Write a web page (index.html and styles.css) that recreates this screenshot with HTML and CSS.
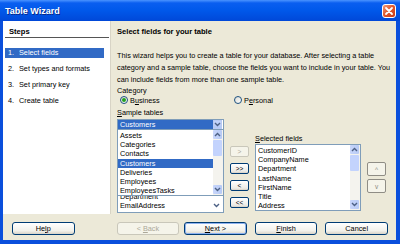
FILE: index.html
```html
<!DOCTYPE html>
<html lang="en">
<head>
  <meta charset="UTF-8" />
  <title>Table Wizard</title>
  <link rel="stylesheet" href="styles.css">
</head>
<body>
<div class="window">
  <div class="titlebar">
    <span class="title">Table Wizard</span>
    <span class="close">
      <svg width="10" height="10" viewBox="0 0 10 10"><path d="M2 2 L8 8 M8 2 L2 8" stroke="#fff" stroke-width="1.8" stroke-linecap="round"/></svg>
    </span>
  </div>

  <div class="main">
    <!-- steps column -->
    <div class="steps">
      <div class="steps-head">Steps</div>
      <ul class="step-list">
        <li class="active"><span class="num">1.</span>Select fields</li>
        <li><span class="num">2.</span>Set types and formats</li>
        <li><span class="num">3.</span>Set primary key</li>
        <li><span class="num">4.</span>Create table</li>
      </ul>
    </div>

    <!-- page content -->
    <div class="content">
      <div class="heading">Select fields for your table</div>
      <p class="intro">
        This wizard helps you to create a table for your database. After selecting a table<br>
        category and a sample table, choose the fields you want to include in your table. You<br>
        can include fields from more than one sample table.
      </p>

      <div class="label cat">Category</div>
      <div class="radios">
        <label class="radio"><span class="dot checked"></span><span>B<u>u</u>siness</span></label>
        <label class="radio"><span class="dot"></span><span>P<u>e</u>rsonal</span></label>
      </div>

      <div class="fields">
        <div class="col-left">
          <div class="label"><u>S</u>ample tables</div>
          <div class="combo">
            <span class="combo-val">Customers</span>
            <span class="drop-btn"><svg width="7" height="5" viewBox="0 0 7 5"><path d="M1 1 L3.5 3.5 L6 1" fill="none" stroke="#4d6185" stroke-width="1.4"/></svg></span>
          </div>
          <div class="listbox tables">
            <ul class="items">
              <li>Assets</li>
              <li>Categories</li>
              <li>Contacts</li>
              <li class="sel">Customers</li>
              <li>Deliveries</li>
              <li>Employees</li>
              <li>EmployeesTasks</li>
            </ul>
            <div class="scrollbar">
              <span class="sb-btn"><svg width="7" height="5" viewBox="0 0 7 5"><path d="M1 4 L3.5 1.5 L6 4" fill="none" stroke="#4d6185" stroke-width="1.4"/></svg></span>
              <span class="sb-thumb"></span>
              <span class="sb-space"></span>
              <span class="sb-btn"><svg width="7" height="5" viewBox="0 0 7 5"><path d="M1 1 L3.5 3.5 L6 1" fill="none" stroke="#4d6185" stroke-width="1.4"/></svg></span>
            </div>
          </div>
          <div class="ghost-box">
            <span class="ghost-cut">Department</span>
            <span class="ghost-val">EmailAddress</span>
            <span class="drop-btn plain"><svg width="7" height="5" viewBox="0 0 7 5"><path d="M1 1 L3.5 3.5 L6 1" fill="none" stroke="#4d6185" stroke-width="1.4"/></svg></span>
          </div>
        </div>

        <div class="move-btns">
          <span class="sbtn disabled">&gt;</span>
          <span class="sbtn">&gt;&gt;</span>
          <span class="sbtn">&lt;</span>
          <span class="sbtn">&lt;&lt;</span>
        </div>

        <div class="col-right">
          <div class="label"><u>S</u>elected fields</div>
          <div class="listbox selected">
            <ul class="items">
              <li>CustomerID</li>
              <li>CompanyName</li>
              <li>Department</li>
              <li>LastName</li>
              <li>FirstName</li>
              <li>Title</li>
              <li>Address</li>
            </ul>
            <div class="scrollbar">
              <span class="sb-btn"><svg width="7" height="5" viewBox="0 0 7 5"><path d="M1 4 L3.5 1.5 L6 4" fill="none" stroke="#4d6185" stroke-width="1.4"/></svg></span>
              <span class="sb-thumb"></span>
              <span class="sb-space"></span>
              <span class="sb-btn"><svg width="7" height="5" viewBox="0 0 7 5"><path d="M1 1 L3.5 3.5 L6 1" fill="none" stroke="#4d6185" stroke-width="1.4"/></svg></span>
            </div>
          </div>
        </div>

        <div class="order-btns">
          <span class="sbtn disabled">^</span>
          <span class="sbtn disabled">v</span>
        </div>
      </div>
    </div>
  </div>

  <div class="footer">
    <span class="btn help"><span>He<u>l</u>p</span></span>
    <span class="btn disabled"><span>&lt; <u>B</u>ack</span></span>
    <span class="btn default"><span><u>N</u>ext &gt;</span></span>
    <span class="btn"><span><u>F</u>inish</span></span>
    <span class="btn"><span>Cancel</span></span>
  </div>
</div>
</body>
</html>
```

FILE: styles.css
```css
* {
  box-sizing: border-box;
}
body {
  margin: 0;
  font-family: "Liberation Sans", Arial, sans-serif;
  font-size: 7.3px;
  color: #000;
}
u {
  text-decoration: underline;
}
.window {
  width: 400px;
  height: 244px;
  background: #0a4fdc;
  padding: 0 4px 4px 3px;
  display: flex;
  flex-direction: column;
}
.titlebar {
  height: 21px;
  margin: 0 -4px 0 -3px;
  padding: 0 4px 0 5px;
  background: linear-gradient(#4a93ff 0, #0a5ef0 3px, #0058ea 50%, #0048d8 100%);
  display: flex;
  align-items: center;
  justify-content: space-between;
}
.title {
  color: #fff;
  font-weight: bold;
  font-size: 9px;
  text-shadow: 1px 1px 0 #0a2a8a;
}
.close {
  width: 14px;
  height: 14px;
  border: 1px solid #fff;
  border-radius: 3px;
  background: linear-gradient(135deg, #f09a7a, #e0562a 50%, #c6391a);
  display: flex;
  align-items: center;
  justify-content: center;
  margin-top: 1px;
}
.main {
  display: flex;
  height: 193px;
  background: #ece9d8;
}
.steps {
  width: 108px;
  background: #fff;
  border-right: 1px solid #d8d4c6;
  padding: 7px 1px 0 2px;
}
.steps-head {
  font-weight: bold;
  font-size: 7.6px;
  padding: 0 0 1px 4px;
  border-bottom: 1px solid #555;
  line-height: 8px;
}
.step-list {
  list-style: none;
  margin: 10px 0 0;
  padding: 0;
}
.step-list li {
  height: 10px;
  line-height: 10px;
  margin-bottom: 6px;
  padding-left: 3px;
  width: 99px;
}
.step-list li.active {
  background: #316ac5;
  color: #fff;
}
.num {
  display: inline-block;
  width: 11px;
}
.content {
  flex: 1;
  padding: 6px 0 0 6px;
}
.heading {
  font-weight: bold;
  font-size: 7.6px;
  line-height: 10px;
}
.intro {
  margin: 13px 0 0;
  line-height: 12px;
}
.label {
  line-height: 10px;
}
.label.cat {
  line-height: 9px;
}
.radios {
  display: flex;
  padding-left: 3px;
  height: 10px;
  align-items: center;
}
.radio {
  display: flex;
  align-items: center;
  gap: 2px;
  width: 114px;
}
.dot {
  width: 8px;
  height: 8px;
  border: 1px solid #1c5180;
  border-radius: 50%;
  background: linear-gradient(135deg, #dcdcd4, #fff);
  display: flex;
  align-items: center;
  justify-content: center;
}
.dot.checked::after {
  content: "";
  width: 4px;
  height: 4px;
  border-radius: 50%;
  background: #21a121;
}
.fields {
  display: flex;
  margin-top: 3px;
}
.col-left {
  width: 107px;
}
.col-left .label {
  margin-bottom: 1px;
}
.combo {
  height: 11px;
  border: 1px solid #7f9db9;
  background: #fff;
  display: flex;
  align-items: center;
  padding: 0 1px 0 0;
}
.combo-val {
  flex: 1;
  height: 9px;
  background: #316ac5;
  color: #fff;
  line-height: 9px;
  padding-left: 2px;
}
.drop-btn {
  width: 9px;
  height: 9px;
  background: linear-gradient(#c1d3fb, #b4c8f5);
  border: 1px solid #b9cbf3;
  display: flex;
  align-items: center;
  justify-content: center;
}
.listbox {
  background: #fff;
  border: 1px solid #7f9db9;
  display: flex;
  overflow: hidden;
}
.listbox.tables {
  height: 66px;
  border-top: none;
}
.items {
  list-style: none;
  margin: 0;
  padding: 1px 0 0 0;
  flex: 1;
}
.items li {
  height: 9.2px;
  line-height: 9px;
  padding-left: 2px;
}
.items li.sel {
  background: #316ac5;
  color: #fff;
}
.scrollbar {
  width: 10px;
  display: flex;
  flex-direction: column;
  background: #f4f3ee;
  padding: 0 1px 1px 0;
}
.sb-btn {
  height: 9px;
  background: linear-gradient(90deg, #c8d6fb, #b7caf5);
  border-radius: 1px;
  display: flex;
  align-items: center;
  justify-content: center;
}
.sb-thumb {
  height: 16px;
  margin: 1px 0;
  background: #c3d3fd;
  border-radius: 1px;
}
.sb-space {
  flex: 1;
}
.ghost-box {
  height: 17px;
  background: #fff;
  border: 1px solid #7f9db9;
  border-top: none;
  position: relative;
  overflow: hidden;
  display: flex;
  align-items: flex-end;
  padding: 0 2px 2px 2px;
}
.ghost-cut {
  position: absolute;
  left: 2px;
  top: -4px;
  line-height: 9px;
}
.ghost-val {
  flex: 1;
  line-height: 9px;
}
.drop-btn.plain {
  background: #fff;
  border-color: #fff;
}
.move-btns {
  width: 19px;
  margin: 38px 6px 0 6px;
  display: flex;
  flex-direction: column;
  gap: 6px;
}
.sbtn {
  height: 11px;
  border: 1px solid #003c74;
  border-radius: 2px;
  background: linear-gradient(#fff, #ecebe6 80%, #d6d0c5);
  display: flex;
  align-items: center;
  justify-content: center;
  font-size: 6.5px;
}
.sbtn.disabled {
  border-color: #c9c7ba;
  color: #aca899;
  background: #f5f4ea;
}
.col-right {
  width: 106px;
  margin-top: 26px;
}
.listbox.selected {
  height: 67px;
}
.order-btns {
  width: 19px;
  margin: 54px 0 0 6px;
  display: flex;
  flex-direction: column;
  gap: 3px;
}
.order-btns .sbtn {
  height: 14px;
  border-color: #8f8d85;
  color: #8a887e;
}
.footer {
  flex: 1;
  background: #ece9d8;
  display: flex;
  align-items: flex-start;
  padding: 8px 0 0 9px;
}
.btn {
  width: 63px;
  height: 13px;
  border: 1px solid #003c74;
  border-radius: 3px;
  background: linear-gradient(#fff, #f2f1eb 70%, #d8d3c8);
  display: flex;
  align-items: center;
  justify-content: center;
  margin-right: 8px;
}
.btn.help {
  margin-right: 42px;
}
.btn.disabled {
  border-color: #c9c7ba;
  color: #aca899;
  background: #f5f4ea;
  margin-right: 5px;
}
.btn.default {
  box-shadow: inset 0 0 0 1px #8db2f0;
}
```
